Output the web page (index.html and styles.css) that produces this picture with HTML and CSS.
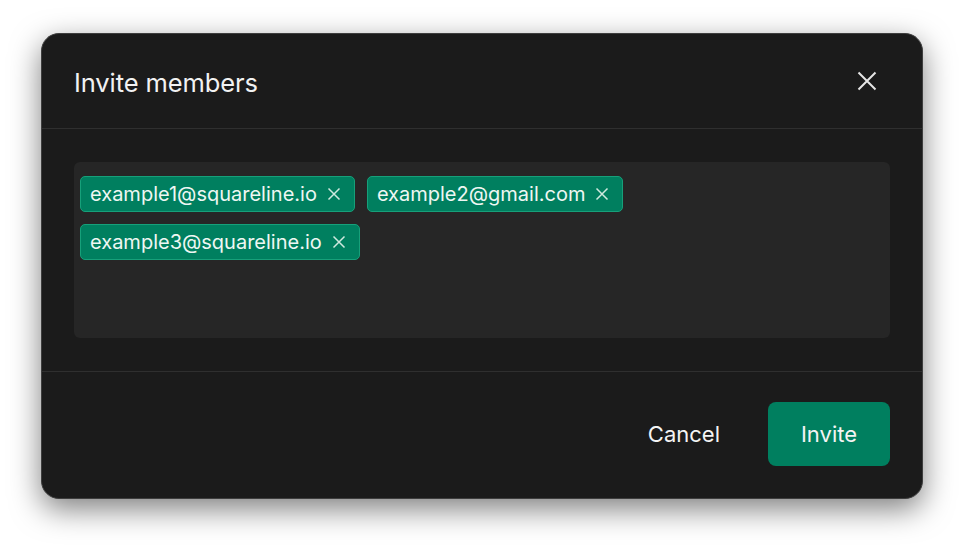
FILE: index.html
```html
<!DOCTYPE html>
<html>
<head>
<meta charset="utf-8">
<link rel="stylesheet" href="styles.css">
</head>
<body>
<div class="stage">
  <div class="dialog">
    <div class="header">
      <h1 class="title">Invite members</h1>
      <button class="close" aria-label="Close">
        <svg width="20" height="20" viewBox="0 0 20 20"><path d="M1.5 1.5L18.5 18.5M18.5 1.5L1.5 18.5" stroke="#e6e6e6" stroke-width="2" fill="none"/></svg>
      </button>
    </div>
    <div class="body">
      <div class="tags">
        <span class="chip">example1@squareline.io<svg class="x" width="14" height="14" viewBox="0 0 14 14"><path d="M1.5 1.5L12.5 12.5M12.5 1.5L1.5 12.5" stroke="#cfe9df" stroke-width="1.5" fill="none"/></svg></span>
        <span class="chip">example2@gmail.com<svg class="x" width="14" height="14" viewBox="0 0 14 14"><path d="M1.5 1.5L12.5 12.5M12.5 1.5L1.5 12.5" stroke="#cfe9df" stroke-width="1.5" fill="none"/></svg></span>
        <span class="chip">example3@squareline.io<svg class="x" width="14" height="14" viewBox="0 0 14 14"><path d="M1.5 1.5L12.5 12.5M12.5 1.5L1.5 12.5" stroke="#cfe9df" stroke-width="1.5" fill="none"/></svg></span>
      </div>
    </div>
    <div class="footer">
      <button class="btn cancel">Cancel</button>
      <button class="btn invite">Invite</button>
    </div>
  </div>
</div>
</body>
</html>
```
FILE: styles.css
```css
* { box-sizing: border-box; }
html, body { margin: 0; padding: 0; background: #ffffff; }
body { font-family: Inter, "Noto Sans", sans-serif; }
.stage {
  width: 963px;
  height: 547px;
  padding: 33px 0 0 41px;
}
.dialog {
  width: 882px;
  height: 466px;
  background: #1b1b1b;
  border: 1px solid #3e3e3e;
  border-radius: 18px;
  box-shadow: 0 10px 30px rgba(0,0,0,0.5);
  display: flex;
  flex-direction: column;
}
.header {
  height: 95px;
  padding: 0 45px 0 32px;
  display: flex;
  align-items: center;
  justify-content: space-between;
  border-bottom: 1px solid #2f2f2f;
}
.title {
  margin: 0;
  font-size: 25.5px;
  font-weight: 400;
  color: #f2f2f2;
  letter-spacing: -0.1px;
  padding-top: 2px;
}
.close {
  background: none;
  border: 0;
  padding: 0;
  width: 20px;
  height: 20px;
  display: flex;
}
.body {
  padding: 33px 32px 33px 32px;
  border-bottom: 1px solid #2f2f2f;
}
.tags {
  height: 176px;
  background: #262626;
  border-radius: 6px;
  padding: 14px 6px;
  display: flex;
  flex-wrap: wrap;
  align-content: flex-start;
  gap: 12px;
}
.chip {
  height: 36px;
  display: inline-flex;
  align-items: center;
  gap: 10px;
  padding: 0 13px 0 9px;
  background: #007f5f;
  border: 1px solid #17a07a;
  border-radius: 5px;
  color: #eef7f3;
  font-size: 20px;
  letter-spacing: 0;
}
.x { flex: none; }
.footer {
  flex: 1;
  display: flex;
  align-items: center;
  justify-content: flex-end;
  padding: 0 32px 2px 0;
  gap: 48px;
}
.btn {
  font-family: Inter, "Noto Sans", sans-serif;
  font-size: 22px;
  color: #f4f4f4;
  border: 0;
  background: none;
  letter-spacing: 0;
}
.cancel { padding: 0; }
.invite {
  width: 122px;
  height: 64px;
  background: #007f5f;
  border-radius: 8px;
}
```
